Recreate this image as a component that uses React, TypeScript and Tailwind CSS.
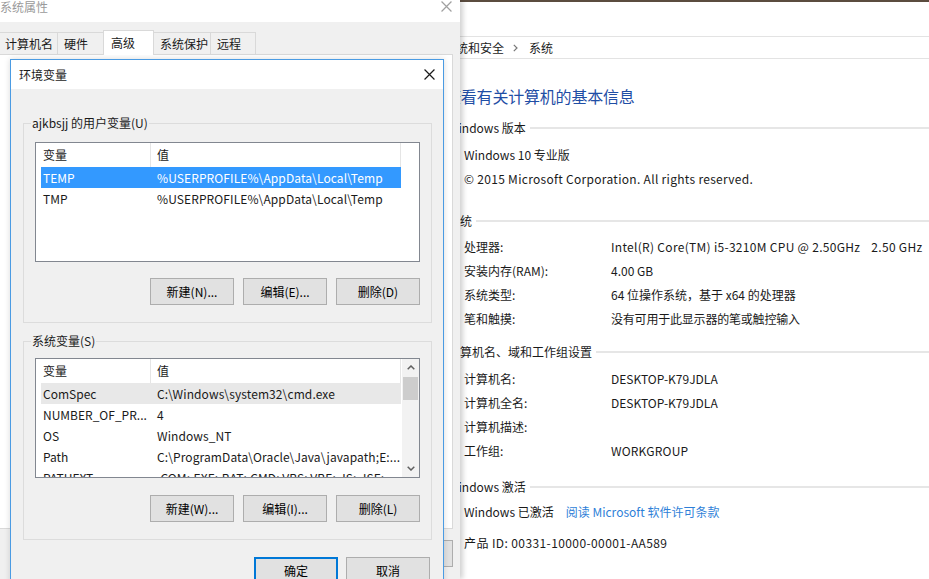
import React from 'react';

const ui = "font-['Noto_Sans_CJK_SC','Noto_Sans',sans-serif]";

function CloseIcon({ className }: { className?: string }) {
  return (
    <svg viewBox="0 0 10 10" className={className} fill="none" stroke="currentColor" strokeWidth="1.1">
      <path d="M0.5 0.5 L9.5 9.5 M9.5 0.5 L0.5 9.5" />
    </svg>
  );
}

function Chevron({ up }: { up?: boolean }) {
  return (
    <svg viewBox="0 0 8 5" className="w-[8px] h-[5px]" fill="none" stroke="#606060" strokeWidth="1.5">
      <path d={up ? 'M0.7 4.3 L4 1 L7.3 4.3' : 'M0.7 0.7 L4 4 L7.3 0.7'} />
    </svg>
  );
}

function WinButton({ label, primary }: { label: string; primary?: boolean }) {
  return (
    <button
      className={
        primary
          ? 'w-[84px] h-[27px] shrink-0 bg-[#e1e1e1] border-2 border-[#0078d7] text-[12px] text-black flex items-center justify-center'
          : 'w-[84px] h-[27px] shrink-0 bg-[#e1e1e1] border border-[#adadad] text-[12px] text-black flex items-center justify-center'
      }
    >
      {label}
    </button>
  );
}

type Row = { name: string; value: string };

function ListBox({ rows, selected, hover, scroll }: { rows: Row[]; selected?: number; hover?: number; scroll?: boolean }) {
  return (
    <div className="h-[120px] border border-[#828790] bg-white flex overflow-hidden text-[12px]">
      <div className="w-[365px] flex flex-col shrink-0">
        <div className="h-[24px] flex items-center shrink-0 border-r border-[#e5e5e5]">
          <div className="w-[115px] h-full pl-[7px] flex items-center border-r border-[#e5e5e5]">变量</div>
          <div className="pl-[6px]">值</div>
        </div>
        {rows.map((r, i) => (
          <div
            key={r.name}
            className={
              i === selected
                ? 'ml-[5px] w-[360px] h-[21px] shrink-0 flex items-center bg-[#3399ff] text-white'
                : i === hover
                ? 'ml-[5px] w-[360px] h-[21px] shrink-0 flex items-center bg-[#e8e8e8] text-[#1a1a1a]'
                : 'ml-[5px] w-[360px] h-[21px] shrink-0 flex items-center text-[#1a1a1a]'
            }
          >
            <div className="w-[110px] pl-[2px] whitespace-nowrap overflow-hidden">{r.name}</div>
            <div className="pl-[6px] whitespace-nowrap overflow-hidden tracking-[0.1px]">{r.value}</div>
          </div>
        ))}
      </div>
      <div className="flex-1 pl-[1px]">
        {scroll && (
          <div className="h-full w-[17px] bg-[#f2f2f2] flex flex-col">
            <div className="h-[17px] flex items-center justify-center">
              <Chevron up />
            </div>
            <div className="mt-[1px] mx-[1px] h-[23px] bg-[#cdcdcd]" />
            <div className="flex-1" />
            <div className="h-[17px] flex items-center justify-center">
              <Chevron />
            </div>
          </div>
        )}
      </div>
    </div>
  );
}

function GroupBox({ title, children, className }: { title: string; children: React.ReactNode; className?: string }) {
  return (
    <fieldset className={'border border-[#dcdcdc] pb-[17px] ' + (className ?? '')}>
      <legend className="ml-[7px] px-[1px] text-[12px] leading-[16px] text-[#1a1a1a]">{title}</legend>
      <div className="mx-[11px]">{children}</div>
    </fieldset>
  );
}

function SectionHeading({ title, className }: { title: string; className?: string }) {
  return (
    <div className={'h-[20px] flex items-center pl-[8px] ' + (className ?? '')}>
      <span className="text-[12px] text-[#1a1a1a] whitespace-nowrap">{title}</span>
      <div className="flex-1 h-[2px] bg-[#e6e6e6] ml-[4px]" />
    </div>
  );
}

function InfoRow({ label, value, className }: { label: string; value?: React.ReactNode; className?: string }) {
  return (
    <div className={'h-[24px] flex items-center pl-[24px] text-[12px] text-[#1a1a1a] whitespace-nowrap ' + (className ?? '')}>
      <span className="w-[147px] shrink-0">{label}</span>
      {value && <span>{value}</span>}
    </div>
  );
}

const userVars: Row[] = [
  { name: 'TEMP', value: '%USERPROFILE%\\AppData\\Local\\Temp' },
  { name: 'TMP', value: '%USERPROFILE%\\AppData\\Local\\Temp' },
];

const sysVars: Row[] = [
  { name: 'ComSpec', value: 'C:\\Windows\\system32\\cmd.exe' },
  { name: 'NUMBER_OF_PR...', value: '4' },
  { name: 'OS', value: 'Windows_NT' },
  { name: 'Path', value: 'C:\\ProgramData\\Oracle\\Java\\javapath;E:...' },
  { name: 'PATHEXT', value: '.COM;.EXE;.BAT;.CMD;.VBS;.VBE;.JS;.JSE;...' },
];

const tabs = [
  { label: '计算机名', w: 'w-[60px]' },
  { label: '硬件', w: 'w-[47px]' },
  { label: '高级', w: 'w-[51px]', active: true },
  { label: '系统保护', w: 'w-[58px]' },
  { label: '远程', w: 'w-[46px]' },
];

export default function App() {
  return (
    <div className={'relative w-[929px] h-[579px] overflow-hidden bg-white ' + ui}>
      {/* control panel window behind */}
      <div className="absolute left-[440px] top-0 right-0 bottom-0 bg-white flex flex-col">
        <div className="h-[2px] bg-[#5b4c3f]" />
        <div className="h-[34px]" />
        <div className="h-[23px] border-y border-[#e3e3e3] flex items-center pl-[4px] text-[12px] text-[#1a1a1a]">
          <span>系统和安全</span>
          <svg viewBox="0 0 5 8" className="w-[5px] h-[8px] ml-[9px] mr-[11px]" fill="none" stroke="#777" strokeWidth="1.2">
            <path d="M0.8 0.8 L4 4 L0.8 7.2" />
          </svg>
          <span>系统</span>
        </div>
        <div className="mt-[25px] h-[24px] flex items-center pl-[5px] text-[16px] text-[#1f4ea5] whitespace-nowrap tracking-[-0.2px]">
          查看有关计算机的基本信息
        </div>
        <SectionHeading title="Windows 版本" className="mt-[10px]" />
        <InfoRow label="Windows 10 专业版" className="mt-[5px]" />
        <InfoRow label="© 2015 Microsoft Corporation. All rights reserved." className="tracking-[0.3px]" />
        <SectionHeading title="系统" className="mt-[20px]" />
        <InfoRow
          label="处理器:"
          className="mt-[4px]"
          value={
            <span className="tracking-[0.3px]">
              Intel(R) Core(TM) i5-3210M CPU @ 2.50GHz<span className="ml-[11px]">2.50 GHz</span>
            </span>
          }
        />
        <InfoRow label="安装内存(RAM):" value="4.00 GB" />
        <InfoRow label="系统类型:" value="64 位操作系统，基于 x64 的处理器" />
        <InfoRow label="笔和触摸:" value={<span className="tracking-[-0.2px]">没有可用于此显示器的笔或触控输入</span>} />
        <SectionHeading title="计算机名、域和工作组设置" className="mt-[11px]" />
        <InfoRow label="计算机名:" value="DESKTOP-K79JDLA" className="mt-[5px]" />
        <InfoRow label="计算机全名:" value="DESKTOP-K79JDLA" />
        <InfoRow label="计算机描述:" />
        <InfoRow label="工作组:" value={<span className="tracking-[0.2px]">WORKGROUP</span>} />
        <SectionHeading title="Windows 激活" className="mt-[14px]" />
        <div className="mt-[3px] h-[24px] flex items-center pl-[24px] text-[12px] text-[#1a1a1a] whitespace-nowrap">
          <span>Windows 已激活</span>
          <span className="ml-[12px] text-[#2f7fd8]">阅读 Microsoft 软件许可条款</span>
        </div>
        <div className="mt-[7px] h-[24px] flex items-center pl-[24px] text-[12px] text-[#1a1a1a] whitespace-nowrap tracking-[0.4px]">
          产品 ID: 00331-10000-00001-AA589
        </div>
      </div>

      {/* system properties window */}
      <div className="absolute left-0 top-0 w-[460px] h-[579px] bg-[#f0f0f0] shadow-[3px_0_5px_rgba(0,0,0,0.18)] flex flex-col">
        <div className="h-[22px] bg-white flex items-start justify-between shrink-0">
          <span className="text-[12px] leading-[14px] text-[#9a9a9a]">系统属性</span>
          <CloseIcon className="w-[11px] h-[11px] mr-[8px] mt-px text-[#a0a0a0]" />
        </div>
        <div className="mt-[8px] h-[24px] flex items-end -ml-[1px] shrink-0">
          {tabs.map((t) =>
            t.active ? (
              <div
                key={t.label}
                className={t.w + ' h-[25px] -ml-px -mb-px z-10 bg-white border border-b-0 border-[#d9d9d9] pl-[7px] flex items-center text-[12px] text-[#1a1a1a]'}
              >
                {t.label}
              </div>
            ) : (
              <div
                key={t.label}
                className={t.w + ' h-[22px] -ml-px bg-[#f0f0f0] border border-b-0 border-[#d9d9d9] pl-[6px] flex items-center text-[12px] text-[#1a1a1a]'}
              >
                {t.label}
              </div>
            )
          )}
        </div>
        <div className="w-[453px] h-[475px] bg-white border border-l-0 border-[#d9d9d9] shrink-0" />
        <div className="flex justify-end w-[453px] mt-[11px]">
          <div className="w-[84px] h-[27px] bg-[#e1e1e1] border border-[#adadad]" />
        </div>
      </div>

      {/* environment variables dialog */}
      <div className="absolute left-[10px] top-[59px] w-[434px] h-[560px] bg-[#f0f0f0] border border-[#4a9be3] shadow-[0_0_6px_rgba(0,0,0,0.15)] flex flex-col text-[#1a1a1a]">
        <div className="h-[29px] bg-white flex items-center justify-between pl-[8px] pr-[8px] shrink-0">
          <span className="text-[12px]">环境变量</span>
          <CloseIcon className="w-[11px] h-[11px] text-[#1a1a1a]" />
        </div>
        <div className="pl-[12px] pr-[11px] flex flex-col">
          <GroupBox title="ajkbsjj 的用户变量(U)" className="mt-[26px]">
            <div className="mt-[11px]">
              <ListBox rows={userVars} selected={0} />
            </div>
            <div className="mt-[16px] flex justify-end gap-[9px]">
              <WinButton label="新建(N)..." />
              <WinButton label="编辑(E)..." />
              <WinButton label="删除(D)" />
            </div>
          </GroupBox>
          <GroupBox title="系统变量(S)" className="mt-[10px]">
            <div className="mt-[9px]">
              <ListBox rows={sysVars} hover={0} scroll />
            </div>
            <div className="mt-[17px] flex justify-end gap-[9px]">
              <WinButton label="新建(W)..." />
              <WinButton label="编辑(I)..." />
              <WinButton label="删除(L)" />
            </div>
          </GroupBox>
          <div className="mt-[17px] flex justify-end gap-[8px] mr-[2px]">
            <WinButton label="确定" primary />
            <WinButton label="取消" />
          </div>
        </div>
      </div>
    </div>
  );
}
